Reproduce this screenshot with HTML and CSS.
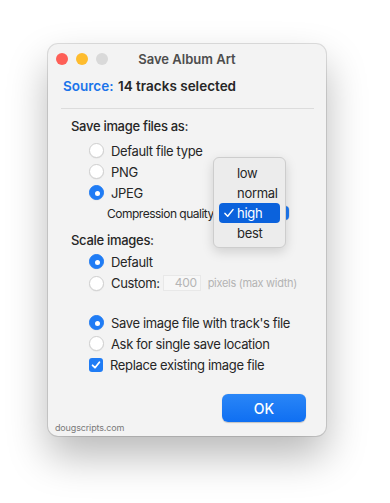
FILE: index.html
```html
<!DOCTYPE html>
<html lang="en">

<head>
    <meta charset="UTF-8">
    <meta name="viewport" content="width=device-width, initial-scale=1.0">
    <title>Save Album Art</title>
    <link rel="stylesheet" href="styles.css">
</head>

<body>
    <div class="window">
        <div class="titlebar">
            <div class="lights">
                <span class="light red"></span>
                <span class="light yellow"></span>
                <span class="light gray"></span>
            </div>
            <div class="title">Save Album Art</div>
        </div>

        <div class="source">
            <span class="source-label">Source:</span>
            <span class="source-value">14 tracks selected</span>
        </div>
        <div class="divider"></div>

        <!-- 文件类型 -->
        <div class="heading">Save image files as:</div>
        <div class="group">
            <div class="row"><span class="radio"></span>Default file type</div>
            <div class="row"><span class="radio"></span>PNG</div>
            <div class="row"><span class="radio on"></span>JPEG</div>
            <div class="row compression">
                <span class="compression-label">Compression quality</span>
                <span class="popup-button"></span>
            </div>
        </div>

        <!-- 缩放 -->
        <div class="heading scale">Scale images:</div>
        <div class="group tight">
            <div class="row"><span class="radio on"></span>Default</div>
            <div class="row custom">
                <span class="radio"></span>Custom:
                <span class="pixel-input">400</span>
                <span class="hint">pixels (max width)</span>
            </div>
        </div>

        <!-- 保存位置 -->
        <div class="group save">
            <div class="row"><span class="radio on"></span>Save image file with track's file</div>
            <div class="row"><span class="radio"></span>Ask for single save location</div>
            <div class="row"><span class="checkbox"><svg width="10" height="10" viewBox="0 0 10 10"><path d="M1.6 5.3 L4 7.7 L8.4 2.2" fill="none" stroke="#fff" stroke-width="1.8" stroke-linecap="round" stroke-linejoin="round"/></svg></span>Replace existing image file</div>
        </div>

        <div class="footer">
            <span class="credit">dougscripts.com</span>
            <button type="button" class="ok-button">OK</button>
        </div>

        <!-- 弹出菜单 -->
        <div class="menu">
            <div class="menu-item">low</div>
            <div class="menu-item">normal</div>
            <div class="menu-item selected"><svg class="check" width="10" height="10" viewBox="0 0 10 10"><path d="M1 5.4 L3.7 8.2 L9 1.6" fill="none" stroke="#fff" stroke-width="1.5" stroke-linecap="round" stroke-linejoin="round"/></svg>high</div>
            <div class="menu-item">best</div>
        </div>
    </div>
</body>

</html>
```

FILE: styles.css
```css
html,
body {
    margin: 0;
    padding: 0;
    background: #fff;
    font-family: Inter, "Noto Sans", sans-serif;
    font-size: 13px;
    color: #262626;
}

body {
    width: 390px;
    height: 503px;
    overflow: hidden;
}

.window {
    position: relative;
    margin: 44px 0 0 48px;
    width: 278px;
    height: 392px;
    box-sizing: border-box;
    background: #f3f3f3;
    border-radius: 10px;
    box-shadow: 0 0 0 1px rgba(0, 0, 0, 0.12), 0 20px 40px rgba(0, 0, 0, 0.28);
    display: flex;
    flex-direction: column;
}

.titlebar {
    position: relative;
    height: 30px;
    display: flex;
    align-items: center;
    justify-content: center;
}

.lights {
    position: absolute;
    left: 8px;
    top: 9px;
    display: flex;
    gap: 8px;
}

.light {
    width: 12px;
    height: 12px;
    border-radius: 50%;
}

.red {
    background: #fe5f57;
}

.yellow {
    background: #febc2e;
}

.gray {
    background: #d9d9d9;
}

.title {
    font-weight: 600;
    color: #4d4d4d;
    font-size: 13px;
}

.source {
    margin-top: 2px;
    height: 20px;
    padding-left: 15px;
    display: flex;
    align-items: center;
    font-size: 13.5px;
    font-weight: 600;
}

.source-label {
    color: #1a74ea;
    width: 55px;
}

.divider {
    margin: 12px 12px 0 13px;
    height: 1px;
    background: #dcdcdc;
}

.heading {
    margin-top: 7px;
    height: 20px;
    line-height: 20px;
    padding-left: 23px;
    font-weight: 500;
    letter-spacing: -0.3px;
}

.group {
    margin-top: 4px;
}

.group.tight {
    margin-top: 1px;
}

.group.save {
    margin-top: 18px;
}

.row {
    height: 21px;
    display: flex;
    align-items: center;
    padding-left: 41px;
    letter-spacing: -0.35px;
    white-space: nowrap;
}

.radio {
    width: 13px;
    height: 13px;
    border-radius: 50%;
    border: 0.5px solid #cfcfcf;
    background: #fff;
    margin-right: 7px;
    box-shadow: 0 0.5px 1px rgba(0, 0, 0, 0.08);
    position: relative;
}

.radio.on {
    background: #1f7cf5;
    border-color: #1f7cf5;
}

.radio.on::after {
    content: "";
    position: absolute;
    left: 4.5px;
    top: 4.5px;
    width: 5px;
    height: 5px;
    border-radius: 50%;
    background: #fff;
}

.checkbox {
    width: 14px;
    height: 14px;
    border-radius: 3px;
    background: #1f7cf5;
    margin-right: 7px;
    display: flex;
    align-items: center;
    justify-content: center;
}

.compression {
    height: 20px;
    padding-left: 59px;
}

.compression-label {
    width: 106px;
    font-size: 12px;
    letter-spacing: -0.5px;
}

.popup-button {
    margin-left: 4px;
    width: 72px;
    height: 14px;
    border-radius: 4px;
    background: linear-gradient(to right, #fff 0, #fff 56px, #1d79f2 56px);
    box-shadow: 0 0 0 0.5px rgba(0, 0, 0, 0.15);
}

.custom {
    height: 22px;
}

.pixel-input {
    margin-left: 3px;
    width: 38px;
    height: 16px;
    box-sizing: border-box;
    background: #f7f7f7;
    border: 1px solid #e8e8e8;
    color: #b5b5b5;
    text-align: right;
    padding-right: 3px;
    line-height: 14px;
    font-size: 12px;
}

.hint {
    margin-left: 7px;
    color: #b3b3b3;
    font-size: 11px;
    letter-spacing: -0.3px;
}

.footer {
    flex: 1;
    display: flex;
    justify-content: space-between;
    align-items: flex-end;
    padding: 0 20px 0 7px;
}

.credit {
    color: #7a7a7a;
    font-size: 9px;
    letter-spacing: -0.15px;
    line-height: 13px;
    margin-bottom: 2px;
}

.ok-button {
    width: 84px;
    height: 28px;
    margin-bottom: 14px;
    border: none;
    border-radius: 6px;
    background: linear-gradient(#2a86f7, #0f6ff2);
    color: #fff;
    font-family: Inter, "Noto Sans", sans-serif;
    font-size: 14px;
    font-weight: 500;
    box-shadow: 0 0.5px 1px rgba(0, 0, 0, 0.2);
}

.menu {
    position: absolute;
    left: 165px;
    top: 113px;
    width: 73px;
    height: 91px;
    box-sizing: border-box;
    padding: 5px 5px 0;
    background: #ececec;
    border: 1px solid #cdcdcd;
    border-radius: 6px;
    box-shadow: 0 4px 12px rgba(0, 0, 0, 0.15);
    letter-spacing: -0.3px;
}

.menu-item {
    position: relative;
    height: 20px;
    line-height: 20px;
    padding-left: 18px;
    border-radius: 4px;
}

.menu-item.selected {
    background: #0b62dc;
    color: #fff;
}

.check {
    position: absolute;
    left: 5px;
    top: 5px;
}
```
